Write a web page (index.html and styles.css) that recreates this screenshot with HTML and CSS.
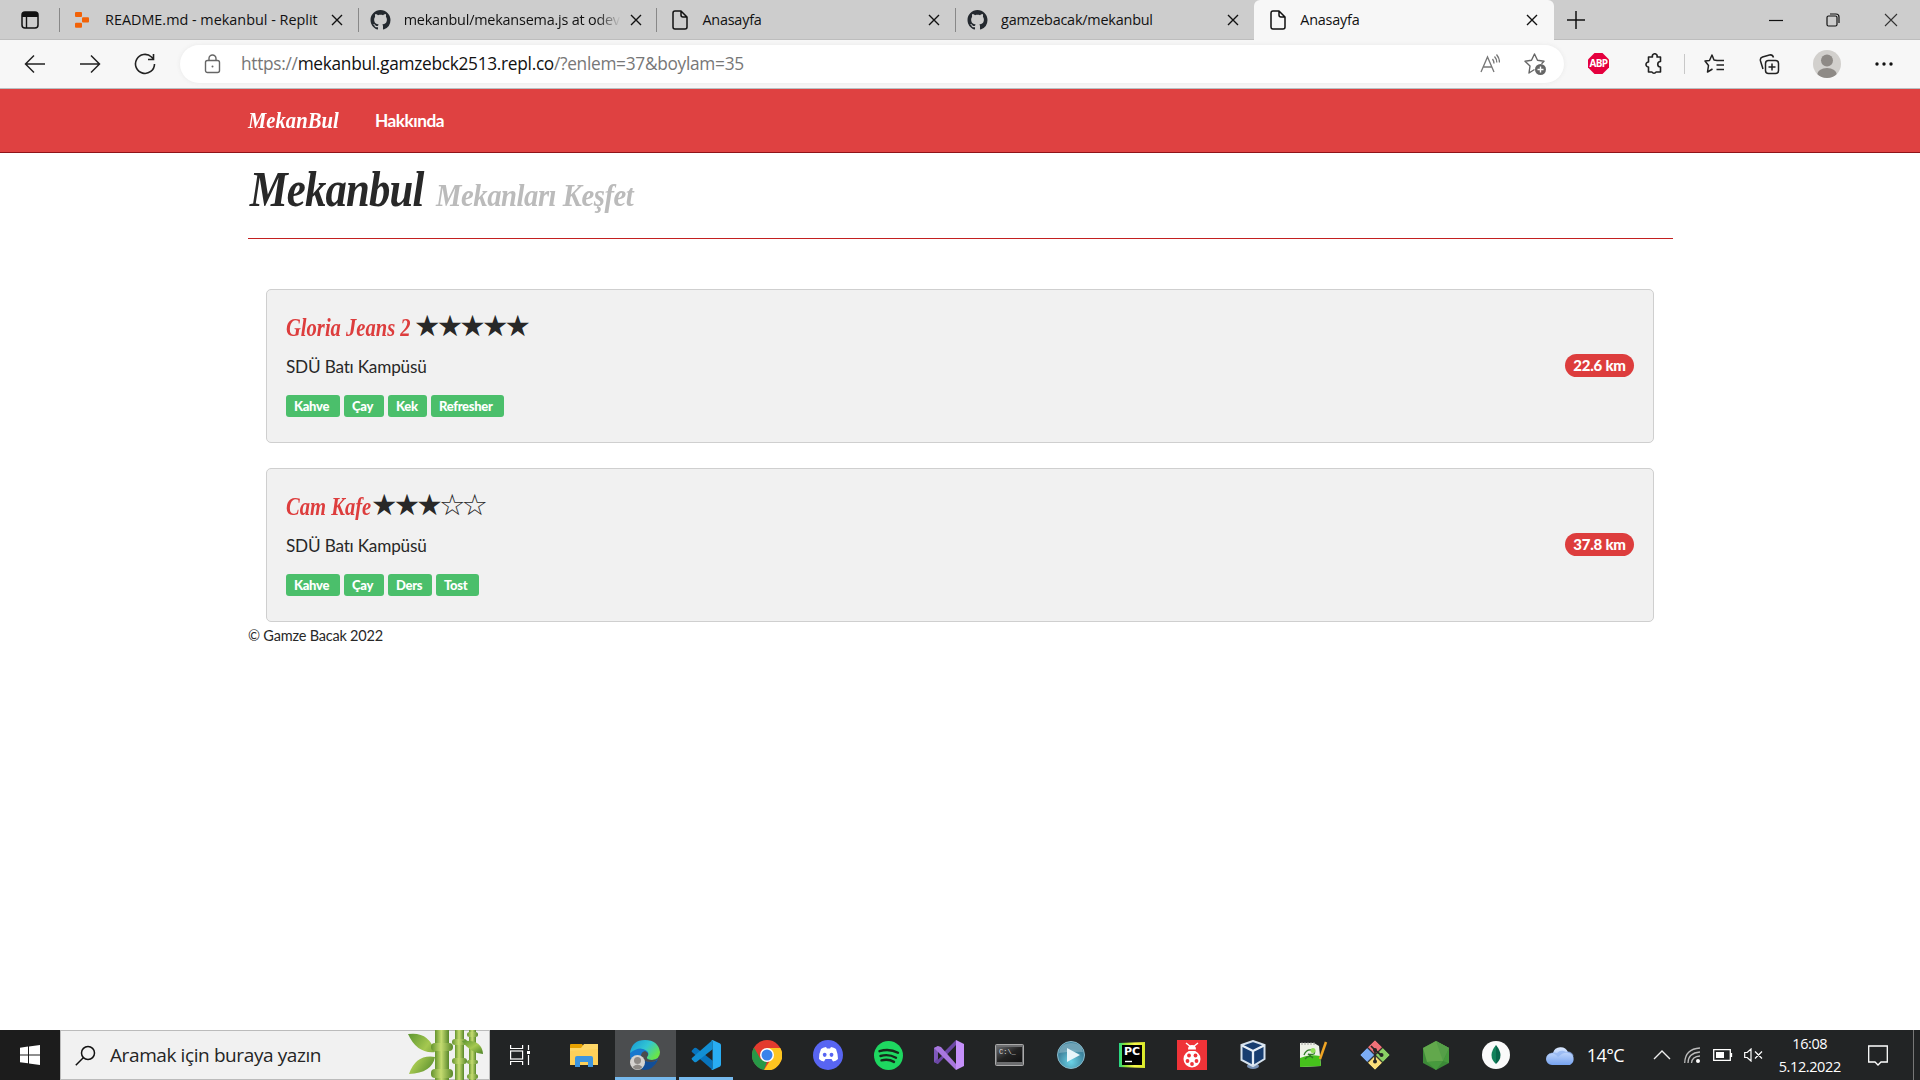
FILE: index.html
```html
<!DOCTYPE html>
<html lang="tr">
<head>
<meta charset="utf-8">
<title>Anasayfa</title>
<link rel="stylesheet" href="styles.css">
</head>
<body>
<svg class="defs" width="0" height="0" aria-hidden="true">
  <symbol id="close" viewBox="0 0 12 12"><path d="M1 1l10 10M11 1L1 11" fill="none" stroke="#111" stroke-width="1.4"/></symbol>
  <symbol id="file" viewBox="0 0 16 20"><path d="M3 1h6l6 6v10a2 2 0 0 1-2 2H3a2 2 0 0 1-2-2V3a2 2 0 0 1 2-2zM9 1v4a2 2 0 0 0 2 2h4" fill="none" stroke="#111" stroke-width="1.5" stroke-linejoin="round"/></symbol>
  <symbol id="github" viewBox="0 0 16 16"><path fill="#24292f" d="M8 0C3.58 0 0 3.58 0 8c0 3.54 2.29 6.53 5.47 7.59.4.07.55-.17.55-.38 0-.19-.01-.82-.01-1.49-2.01.37-2.53-.49-2.69-.94-.09-.23-.48-.94-.82-1.13-.28-.15-.68-.52-.01-.53.63-.01 1.08.58 1.23.82.72 1.21 1.87.87 2.33.66.07-.52.28-.87.51-1.07-1.78-.2-3.64-.89-3.64-3.95 0-.87.31-1.59.82-2.15-.08-.2-.36-1.02.08-2.12 0 0 .67-.21 2.2.82.64-.18 1.32-.27 2-.27s1.36.09 2 .27c1.53-1.04 2.2-.82 2.2-.82.44 1.1.16 1.92.08 2.12.51.56.82 1.27.82 2.15 0 3.07-1.87 3.75-3.65 3.95.29.25.54.73.54 1.48 0 1.07-.01 1.93-.01 2.2 0 .21.15.46.55.38A8.01 8.01 0 0 0 16 8c0-4.42-3.58-8-8-8z"/></symbol>
</svg>

<header class="browser">
  <div class="tabstrip">
    <div class="tab-actions"><svg width="18" height="18" viewBox="0 0 18 18"><rect x="1" y="1" width="16" height="16" rx="3" fill="none" stroke="#111" stroke-width="1.5"/><path d="M1 6V3.500Q1 1 4 1h10q3 0 3 2.500V6z" fill="#111"/><path d="M5.500 6v11" stroke="#111" stroke-width="1.400"/></svg></div>
    <div class="tab"><span class="fav"><svg width="14" height="16" viewBox="0 0 14 16" fill="#f26207"><rect x="0" y="0" width="7" height="5" rx="1"/><rect x="7" y="5.300" width="7" height="5.200" rx="1"/><rect x="0" y="10.800" width="7" height="5" rx="1"/></svg></span><span class="title t1">README.md - mekanbul - Replit</span><svg class="x"><use href="#close"/></svg></div>
    <div class="tab"><span class="fav"><svg width="21" height="20"><use href="#github"/></svg></span><span class="title fade">mekanbul/mekansema.js at odev</span><svg class="x"><use href="#close"/></svg></div>
    <div class="tab"><span class="fav"><svg width="16" height="20"><use href="#file"/></svg></span><span class="title">Anasayfa</span><svg class="x"><use href="#close"/></svg></div>
    <div class="tab"><span class="fav"><svg width="21" height="20"><use href="#github"/></svg></span><span class="title">gamzebacak/mekanbul</span><svg class="x"><use href="#close"/></svg></div>
    <div class="tab active"><span class="fav"><svg width="16" height="20"><use href="#file"/></svg></span><span class="title">Anasayfa</span><svg class="x"><use href="#close"/></svg></div>
    <svg class="plus" width="18" height="18"><path d="M9 0v18M0 9h18" stroke="#111" stroke-width="1.500"/></svg>
    <div class="window-controls">
      <svg width="14" height="14"><path d="M0 7.500h14" stroke="#111" stroke-width="1.200"/></svg>
      <svg width="14" height="14" fill="none" stroke="#111" stroke-width="1.200"><rect x="1" y="3" width="10" height="10" rx="1.500"/><path d="M4 1h6q3 0 3 3v6"/></svg>
      <svg width="14" height="14"><path d="M1 1l12 12M13 1L1 13" stroke="#333" stroke-width="1.100"/></svg>
    </div>
  </div>
  <div class="toolbar">
    <span class="tool"><svg width="22" height="20" fill="none" stroke="#222" stroke-width="1.500"><path d="M21 10H2M10 1.500L1.500 10l8.500 8.500"/></svg></span>
    <span class="tool"><svg width="22" height="20" fill="none" stroke="#222" stroke-width="1.500"><path d="M1 10h19M12 1.500l8.500 8.500-8.500 8.500"/></svg></span>
    <span class="tool"><svg width="22" height="22" fill="none" stroke="#222" stroke-width="1.600"><path d="M20.500 11A9.500 9.500 0 1 1 17.500 4l1.800 2M19.500 1v5.500H14"/></svg></span>
    <div class="address">
      <svg class="lock" width="18" height="20" fill="none" stroke="#666" stroke-width="1.400"><rect x="1.500" y="6.500" width="14" height="12" rx="2"/><path d="M5 6.500V4.500a3.500 3.500 0 0 1 7 0v2"/><circle cx="8.500" cy="12.500" r="1" fill="#666" stroke="none"/></svg>
      <span class="url">https://<b>mekanbul.gamzebck2513.repl.co</b>/?enlem=37&amp;boylam=35</span>
      <svg class="read" width="20" height="20" fill="none" stroke="#777" stroke-width="1.300"><path d="M1 18L7.500 3 14 18M3.300 13h8.400M12.500 5q1.500 2 1.500 4.500M14.500 2.500q2.300 2.500 2.300 6M16.500.500q3 3.500 3 8"/></svg>
      <svg class="addfav" width="24" height="23" fill="none" stroke="#666" stroke-width="1.400" stroke-linejoin="round"><path d="M10.500 16.500L5 20l1-7L1 8.300l6.500-1L10.500 1l3 6.300 6.500 1-2.500 2.500"/><circle cx="16.500" cy="16.500" r="5.500" fill="#666" stroke="none"/><path d="M16.500 13.500v6M13.500 16.500h6" stroke="#fff"/></svg>
    </div>
    <span class="tool abp"><svg width="22" height="22"><path d="M6.500 0h8L21 6.500v8L14.500 21h-8L0 14.500v-8z" fill="#e5003e"/><text x="10.500" y="14.300" text-anchor="middle" class="abp-text">ABP</text></svg></span>
    <span class="tool"><svg width="20" height="22" fill="none" stroke="#222" stroke-width="1.600" stroke-linejoin="round"><path d="M6 4h2.500a2.400 2.400 0 1 1 4.500 0h3.500v4.500a1.500 1.500 0 0 0 0 5.500v5H12a2.200 2.200 0 0 1-4 0H4.500v-5a2.500 2.500 0 1 1 0-5V4z"/></svg></span>
    <i class="tool-sep"></i>
    <span class="tool"><svg width="21" height="20" fill="none" stroke="#222" stroke-width="1.500" stroke-linejoin="round"><path d="M13 6.500L10 6 8 1 5.500 6.500 1 7l3.500 4.500L3.500 18l5-3M12.500 6.500H20M12.500 11H20M12.500 15.500H20"/></svg></span>
    <span class="tool"><svg width="21" height="21" fill="none" stroke="#222" stroke-width="1.500"><rect x="6.500" y="6.500" width="13" height="13" rx="3"/><path d="M13 9.500v7M9.500 13h7M4 15L1.500 7Q.700 4 3.500 3l7-2q3-.700 4 2.500"/></svg></span>
    <span class="tool profile"><svg width="28" height="28"><defs><clipPath id="av"><circle cx="14" cy="14" r="14"/></clipPath></defs><g clip-path="url(#av)"><path fill="#d2d0cd" d="M0 0h28v28H0z"/><circle cx="14" cy="10.500" r="6" fill="#8e8a86"/><ellipse cx="14" cy="25" rx="10" ry="7" fill="#8e8a86"/></g></svg></span>
    <span class="tool"><svg width="18" height="4" fill="#111"><circle cx="2" cy="2" r="1.700"/><circle cx="9" cy="2" r="1.700"/><circle cx="16" cy="2" r="1.700"/></svg></span>
  </div>
</header>

<main class="page">
  <nav class="navbar"><div class="brand"><a>MekanBul</a></div><a class="navlink">Hakkında</a></nav>
  <div class="container">
    <h1 class="heading"><span class="name">Mekanbul</span><small>Mekanları Keşfet</small></h1>
    <section class="venues">
      <article class="card">
        <div>
          <h4><a class="gloria">Gloria Jeans 2</a><span class="stars">★★★★★</span></h4>
          <p>SDÜ Batı Kampüsü</p>
          <div class="tags"><span style="width:54px">Kahve</span><span style="width:40px">Çay</span><span style="width:39px">Kek</span><span style="width:73px">Refresher</span></div>
        </div>
        <span class="distance">22.6 km</span>
      </article>
      <article class="card">
        <div>
          <h4><a class="cam">Cam Kafe</a><span class="stars">★★★☆☆</span></h4>
          <p>SDÜ Batı Kampüsü</p>
          <div class="tags"><span style="width:54px">Kahve</span><span style="width:40px">Çay</span><span style="width:44px">Ders</span><span style="width:43px">Tost</span></div>
        </div>
        <span class="distance">37.8 km</span>
      </article>
    </section>
    <footer>© Gamze Bacak 2022</footer>
  </div>
</main>

<div class="taskbar">
  <div class="start"><svg width="20" height="20" fill="#fff"><path d="M0 2.700l8-1.100v7.900H0zM9 1.400L20 0v9.500H9zM0 10.500h8v7.800l-8-1.100zM9 10.500h11V20L9 18.500z"/></svg></div>
  <div class="search">
    <svg class="lens" width="21" height="21" fill="none" stroke="#111" stroke-width="1.500"><circle cx="13" cy="8" r="6.500"/><path d="M8.500 12.500L.800 20.200"/></svg>
    <span>Aramak için buraya yazın</span>
    <svg class="bamboo" width="78" height="50" viewBox="0 0 78 50">
      <defs><linearGradient id="cane"><stop offset="0" stop-color="#64932d"/><stop offset=".45" stop-color="#c5dc70"/><stop offset="1" stop-color="#58872a"/></linearGradient><linearGradient id="leaf" x2="1" y2="1"><stop offset="0" stop-color="#5d9630"/><stop offset=".5" stop-color="#a5c850"/><stop offset="1" stop-color="#4c8427"/></linearGradient></defs>
      <path d="M1 4Q22 1 28 22Q10 24 1 4zM2 44Q9 24 28 27Q25 43 2 44z" fill="url(#leaf)"/>
      <g fill="url(#cane)"><rect x="28" width="14" height="50"/><rect x="48" width="9" height="50"/><rect x="62" width="7" height="50"/><rect x="24" y="13" width="22" height="8" rx="4"/><rect x="24" y="39" width="22" height="9" rx="4"/><rect x="45" y="9" width="15" height="6" rx="3"/><rect x="45" y="28" width="15" height="6" rx="3"/><rect x="60" y="2" width="11" height="5" rx="2.500"/><rect x="60" y="30" width="11" height="4" rx="2"/><rect x="60" y="44" width="11" height="5" rx="2.500"/></g>
      <path d="M55 11Q75 9 76 24Q63 23 55 11z" fill="url(#leaf)"/>
    </svg>
  </div>
  <div class="apps">
    <span class="taskview"><svg width="20" height="20" fill="none" stroke="#fff" stroke-width="1.200"><path d="M.600 0v3.500h12V0M.600 20v-3.500h12V20M18.500 0v5M18.500 10v10"/><rect x=".600" y="6" width="12" height="8"/><path d="M17 6h3v3h-3z" fill="#fff" stroke="none"/></svg></span>
    <span><svg width="28" height="24"><path d="M0 2q0-1 1-1h11l2 3v6H0z" fill="#e8a200"/><path d="M0 5h11l3-4h14v21H0z" fill="#ffd767"/><path d="M0 22V8l28-2v16z" fill="#fdcb50" opacity=".6"/><path d="M5 24V15q0-2 2-2h14q2 0 2 2v9h-5v-5h-8v5z" fill="#3d95df"/></svg></span>
    <span class="current"><svg width="30" height="30" viewBox="0 0 30 30"><defs><linearGradient id="eg" y2=".6"><stop offset="0" stop-color="#1595d5"/><stop offset=".55" stop-color="#32c6d3"/><stop offset="1" stop-color="#69e548"/></linearGradient></defs><circle cx="14" cy="15" r="14" fill="#1678ce"/><path d="M11 15q1 7 9 7 4 0 8-2-5 10-14 10Q6 28 8 20z" fill="#124e98"/><path d="M0 13Q2 0 15 0q13 0 15 12 0 7-8 8-6 0-5-3 3-3 0-6Q10 5 0 13z" fill="url(#eg)"/><path d="M11 16q0-4 4-5 5 2 2 6-1 3 5 3 4 0 6-2-2 4-7 4-9 0-10-6z" fill="#4a4b4c"/><circle cx="7.500" cy="22.500" r="7.500" fill="#d5d3d0"/><circle cx="7.500" cy="20.500" r="3.500" fill="#8e8a86"/><path d="M2.500 27q5-5 10 0-5 5-10 0z" fill="#8e8a86"/></svg></span>
    <span class="running"><svg width="30" height="30" viewBox="0 0 100 100"><path d="M3 35l8-8q3-2 7 0l54 42v31L3 40q-2-2 0-5z" fill="#0874bd"/><path d="M3 65l8 8q3 2 7 0l54-42V0L3 60q-2 2 0 5z" fill="#128fd4"/><path d="M72 0l25 12q3 2 3 6v64q0 4-3 6L72 100q-4 0-6-3 6 3 6-3V6q0-6-6-3 2-3 6-3z" fill="#29adf3"/></svg></span>
    <span><svg width="30" height="30" viewBox="0 0 30 30"><circle cx="15" cy="15" r="15" fill="#e33b2e"/><path d="M2 7.500L8.500 19 15 22 12 30A15 15 0 0 1 2 7.500z" fill="#279847"/><path d="M15 8h13.300A15 15 0 0 1 12 30l7-11z" fill="#fdc520"/><circle cx="15" cy="15" r="7" fill="#fff"/><circle cx="15" cy="15" r="5.500" fill="#3983eb"/></svg></span>
    <span><svg width="30" height="30" viewBox="0 0 30 30"><circle cx="15" cy="15" r="15" fill="#5865f2"/><path d="M8 9q2-1.500 5-2l1 1.500h3l1-1.500q3 .5 5 2 2 5 2 10-2 2-5 2.500l-1.500-2.500h-6L11 21.500q-3-.5-5-2.500 0-6 2-10z" fill="#fff"/><ellipse cx="11.700" cy="14.800" rx="1.900" ry="2.100" fill="#5865f2"/><ellipse cx="18.500" cy="14.800" rx="1.900" ry="2.100" fill="#5865f2"/></svg></span>
    <span><svg width="29" height="29" viewBox="0 0 29 29"><circle cx="14.500" cy="14.500" r="14.500" fill="#1ed760"/><path d="M5.500 10.200q10-3 18.500 1.600M6.500 15q8-2.400 15.500 1.700M7.500 19.400q7-1.800 12.500 1.500" fill="none" stroke="#17291b" stroke-width="2.400" stroke-linecap="round"/></svg></span>
    <span><svg width="30" height="30" viewBox="0 0 30 30"><path d="M0 8l4-2v18l-4-2z" fill="#7e58ba"/><path d="M4 24L22 5V0L0 22z" fill="#6b47a5"/><path d="M4 10.500v9L9 15z" fill="#222"/><path d="M4 6l3 1 15 17v6L0 8z" fill="#a877df"/><path d="M22 0l8 4v22l-8 4z" fill="#c590fa"/></svg></span>
    <span><svg width="29" height="22"><defs><linearGradient id="term" x2="1" y2="1"><stop stop-color="#65676a"/><stop offset=".5" stop-color="#222"/><stop offset="1" stop-color="#111"/></linearGradient></defs><rect x=".5" y=".5" width="28" height="21" rx="1" fill="#6c6d6f" stroke="#aaa"/><path d="M2 3h25v15H2z" fill="url(#term)"/><text x="4" y="10" class="cmd">C:\_</text></svg></span>
    <span><svg width="28" height="28"><defs><radialGradient id="play" cy=".75"><stop stop-color="#6bd4e8"/><stop offset="1" stop-color="#3f849e"/></radialGradient></defs><circle cx="14" cy="14" r="13.500" fill="url(#play)" stroke="#8ab9c9"/><path d="M2 12Q3 2 14 2t12 9q-12-1-24 1z" fill="#fff" opacity=".25"/><path d="M10 7l13 7-13 7z" fill="#e7f5fa"/></svg></span>
    <span><svg width="26" height="26"><defs><linearGradient id="pcg"><stop stop-color="#21d789"/><stop offset=".25" stop-color="#94e332"/><stop offset=".6" stop-color="#fcf84a"/><stop offset="1" stop-color="#d6e827"/></linearGradient></defs><path d="M0 1l26-1v26L0 25z" fill="url(#pcg)"/><path d="M3 3h20v20H3z"/><path d="M6 19.500h7" stroke="#fff" stroke-width="1.400"/><text x="5" y="13" class="pc">PC</text></svg></span>
    <span><svg width="30" height="30"><path d="M0 0h30v30H0z" fill="#ef3338"/><path d="M9 3l5 4M21 3l-5 4" stroke="#fff" stroke-width="1.500"/><path d="M11 9.500q0-4.500 4-4.500t4 4.500z" fill="#fff"/><ellipse cx="15" cy="19" rx="8.500" ry="8.500" fill="#fff"/><g fill="#ef3338"><path d="M9 10h12v1H9z"/><circle cx="12" cy="15.500" r="1.900"/><circle cx="18.500" cy="15.500" r="1.900"/><circle cx="10.500" cy="21" r="1.900"/><circle cx="19.500" cy="21" r="1.900"/><circle cx="15" cy="24" r="1.900"/></g></svg></span>
    <span><svg width="26" height="30"><ellipse cx="13" cy="26" rx="6" ry="3" fill="#7891b4"/><path d="M1.500 5L13 1l11.500 4v14L13 26 1.500 20z" fill="#173d70" stroke="#d5e1ed" stroke-width="2"/><path d="M2 5.500L13 11l11-5.500M13 11v14" fill="none" stroke="#e6eef6" stroke-width="2.300"/></svg></span>
    <span><svg width="29" height="28"><path d="M1 2h14l5 3 2 20-21 1z" fill="#eef1e7"/><path d="M1 17q9-4 20-2l1 10-21 1z" fill="#46c21c"/><path d="M5 14q2-6 8-5 4 0 2 4-3 1-6 0l5 4M6 18q3-4 8-2" fill="none" stroke="#2f7a25" stroke-width="1.300"/><circle cx="14" cy="9.500" r="2.500" fill="#90df57"/><path d="M3 1v3M6 1v3M9 1v3M12 1v3M15 1v3" stroke="#888" stroke-width=".8"/><path d="M21 18l6-17" stroke="#f0a524" stroke-width="2.500"/></svg></span>
    <span><svg width="30" height="30" viewBox="0 0 30 30"><g stroke="#222" stroke-width=".6"><path d="M15 0l7.300 7.200L15 14.500 7.700 7.200z" fill="#f07078"/><path d="M22.800 7.700L30 15l-7.200 7.300L15.500 15z" fill="#8bcf65"/><path d="M15 15.500l7.300 7.300L15 30l-7.300-7.200z" fill="#fbdf7b"/><path d="M7.200 7.700l7.300 7.300-7.300 7.300L0 15z" fill="#7badf5"/></g><path d="M11 6l4 4v12M15 10l6 5" fill="none" stroke="#252525" stroke-width="1.700"/><circle cx="15" cy="10" r="2" fill="#252525"/><circle cx="21.500" cy="15" r="2" fill="#252525"/><circle cx="15" cy="21.500" r="2" fill="#252525"/></svg></span>
    <span><svg width="26" height="29"><path d="M13 0l13 7v15l-13 7-13-7V7z" fill="#3d8a38"/><path d="M13 0l13 7-6 13-16 1L0 7z" fill="#62a84c"/><path d="M13 0l13 7-6 13z" fill="#559f48"/><path d="M26 7v15l-6-2zM4 21l16-1-7 9z" fill="#479a3e"/></svg></span>
    <span><svg width="28" height="28"><circle cx="14" cy="14" r="14" fill="#fafafa"/><path d="M14 4q-9 11 0 19z" fill="#11815b"/><path d="M14 4q9 11 0 19z" fill="#09664b"/></svg></span>
  </div>
  <div class="weather"><svg width="30" height="20"><defs><linearGradient id="cl" x2="0" y2="1"><stop stop-color="#dce9ff"/><stop offset="1" stop-color="#76a3f0"/></linearGradient></defs><path d="M6 20a6 6 0 0 1 0-12h1a8 8 0 0 1 15-1 7 7 0 0 1 2 13z" fill="url(#cl)"/><path d="M0 13q5-9 12-1 8-8 16-1-3-6-8-4Q15 4 11 8 3 6 0 13z" fill="#8db0ef" opacity=".7"/></svg><span>14°C</span></div>
  <div class="tray">
    <svg width="18" height="10"><path d="M1 9l8-8 8 8" fill="none" stroke="#eee" stroke-width="1.400"/></svg>
    <svg width="16" height="16" fill="none" stroke="#bbb" stroke-width="1.300"><path d="M.700 16Q1 2 16 1M4 16Q4 6 16 5M7.500 16Q8 9.500 16 9"/><circle cx="14" cy="14" r="2" fill="#fff" stroke="none"/></svg>
    <svg width="20" height="12"><path d="M.700.700h16.600v10.600H.700zM18.500 4v4" fill="none" stroke="#fff" stroke-width="1.300"/><path d="M3 3h8v6H3z" fill="#fff"/></svg>
    <svg class="volume" width="19" height="14" fill="none" stroke="#fff" stroke-width="1.200"><path d="M.700 4.500h2.500L7 1v12L3.200 9.500H.700zM11 3.500l7 7M18 3.500l-7 7"/></svg>
  </div>
  <div class="clock"><span>16:08</span><span>5.12.2022</span></div>
  <svg class="notice" width="20" height="21"><path d="M.700 1h18.600v16H13l-3 3-3-3H.700z" fill="none" stroke="#fff" stroke-width="1.300"/></svg>
  <i class="desktop-line"></i>
</div>
</body>
</html>
```
FILE: styles.css
```css
* { box-sizing: border-box; }
body { margin: 0; width: 1920px; height: 1080px; overflow: hidden; display: flex; flex-direction: column; background: #fff; font-family: "Open Sans", "Noto Sans", sans-serif; }
svg { flex: none; display: block; }
.defs { display: none; }
.browser { flex: none; height: 89px; background: #f7f7f7; border-bottom: 1px solid #b9bfc2; }
.tabstrip { height: 40px; background: #cdcdcd; display: flex; align-items: center; border-bottom: 1px solid #bdbdbd; }
.tab-actions { width: 59px; padding-left: 21px; }
.tab { width: 298.7px; height: 24px; border-left: 1px solid #888; display: flex; align-items: center; color: #111; }
.fav { width: 45px; padding-left: 11px; display: flex; justify-content: flex-start; }
.fav svg[width="14"], .fav svg[width="16"] { margin-left: 4px; }
.title { width: 219px; height: 22px; line-height: 21px; overflow: hidden; white-space: nowrap; font-size: 14.4px; letter-spacing: -.2px; }
.t1 { letter-spacing: 0; }
.fade { -webkit-mask-image: linear-gradient(90deg, #000 88%, transparent 99%); mask-image: linear-gradient(90deg, #000 88%, transparent 99%); }
.x { width: 12px; height: 12px; margin-left: 7px; }
.tab.active { width: 300px; height: 40px; margin-top: 1px; padding-left: 1.5px; background: #f7f7f7; border: 0; border-radius: 6px 6px 0 0; }
.plus { margin-left: 13px; }
.window-controls { margin-left: 184px; display: flex; gap: 43.500px; }
.toolbar { height: 48px; padding-left: 7.5px; display: flex; align-items: center; }
.tool { width: 55px; display: flex; justify-content: center; }
.address { width: 1384px; height: 38px; margin-left: 7.5px; border-radius: 19px; background: #fff; display: flex; align-items: center; box-shadow: 0 0 4px #e8e8e8; }
.lock { margin-left: 24px; }
.url { flex: 1; margin-left: 19px; font-size: 17.3px; line-height: 30px; letter-spacing: -.29px; color: #777; padding-bottom: 1px; }
.url b { font-weight: 400; color: #111; }
.read { margin-right: 24px; }
.addfav { margin-right: 16px; }
.abp { margin-left: 7px; }
.abp-text { font: bold 10px "Open Sans", sans-serif; fill: #fff; letter-spacing: -.6px; }
.tool-sep { width: 1px; height: 20px; margin: 0 2.5px; background: #c8c8c8; }
.profile { width: 59px; }

.page { flex: 1; font-family: Lato, sans-serif; color: #282828; }
.navbar { height: 64px; padding-left: 248px; display: flex; align-items: center; background: #df4141; border-bottom: 1px solid #8f1319; color: #fff; }
.brand, .heading, h4 a { font-family: "Liberation Serif", serif; font-style: italic; font-weight: 700; }
.brand { width: 127px; font-size: 24px; }
.brand a { display: inline-block; transform: scaleX(.86); transform-origin: left; }
.navlink { font-size: 17.3px; font-weight: 700; letter-spacing: -.5px; }
.container { width: 1425px; margin: 0 auto 0 248px; }
.heading { height: 86px; margin: 0; padding-top: 6px; border-bottom: 1px solid #c32020; display: flex; align-items: baseline; line-height: 60px; font-size: 50px; }
.name { width: 188px; padding-left: 2px; letter-spacing: -1px; transform: scaleX(.855); transform-origin: left; }
.heading small { font-size: 31px; letter-spacing: -.5px; color: #bbb; white-space: nowrap; transform: scaleX(.925); transform-origin: left; }
.venues { margin: 50px 19px 0 18px; display: flex; flex-direction: column; gap: 25px; }
.card { height: 154px; padding: 22px 19px 0; background: #f1f1f1; border: 1px solid #cfcfcf; border-radius: 5px; display: flex; justify-content: space-between; }
.card h4 { height: 32px; margin: 0; display: flex; align-items: center; white-space: nowrap; }
.card h4 a { font-size: 24.5px; font-weight: 700; color: #dd3d3d; line-height: 32px; transform: scaleX(.84); transform-origin: left; }
.gloria { width: 129px; }
.cam { width: 86px; }
.stars { font: 29.5px/28px "DejaVu Sans", sans-serif; letter-spacing: -3.8px; margin: -4px 0 0 -1px; }
.card p { height: 24px; margin: 11px 0 0; font-size: 17.200px; line-height: 24px; letter-spacing: -.2px; }
.tags { display: flex; gap: 4px; margin-top: 16px; }
.tags span { height: 22px; padding-left: 8px; border-radius: 3px; background: #4bbf6b; color: #fff; font-size: 13px; font-weight: 900; line-height: 22px; letter-spacing: -.3px; }
.distance { width: 69px; height: 23px; margin-top: 42px; border-radius: 12px; background: #dd3d3d; color: #fff; font-size: 15px; font-weight: 900; line-height: 22px; text-align: center; letter-spacing: -.2px; }
footer { font-size: 14.500px; line-height: 28px; letter-spacing: -.2px; }

.taskbar { flex: none; height: 50px; background: #222425; color: #fff; display: flex; align-items: center; }
.start { width: 60px; height: 50px; background: #1c1c1c; display: flex; align-items: center; justify-content: center; }
.search { width: 430px; height: 50px; background: #f1f1f1; border: 1px solid #bbb; display: flex; align-items: center; color: #252525; font-size: 19px; }
.lens { margin-left: 14px; }
.search span { width: 297px; padding-left: 14px; letter-spacing: -.4px; }
.bamboo { margin-left: 14px; }
.apps { display: flex; height: 50px; }
.apps span { width: 60.8px; display: flex; align-items: center; justify-content: center; border-bottom: 3px solid transparent; padding-top: 3px; }
.apps .taskview { width: 64px; padding-right: 4px; }
.apps .current { background: #4b4d4f; border-color: #76b9ed; }
.apps .running { border-image: linear-gradient(90deg, transparent 9%, #76b9ed 9%, #76b9ed 91%, transparent 91%) 3; }
.cmd { font: 7px "Liberation Mono", monospace; fill: #ddd; }
.pc { font: bold 11px "DejaVu Sans", sans-serif; fill: #fff; }
.weather { width: 126px; padding-left: 19px; display: flex; align-items: center; gap: 11px; font-size: 18px; letter-spacing: -.6px; }
.tray { display: flex; align-items: center; gap: 13px; }
.volume { margin-left: -2px; }
.clock { width: 80px; margin-left: 7px; display: flex; flex-direction: column; align-items: center; font-size: 14.500px; line-height: 23px; letter-spacing: -.4px; }
.notice { margin-left: 18px; }
.desktop-line { width: 1px; height: 50px; margin-left: 25px; background: #777; }
```
